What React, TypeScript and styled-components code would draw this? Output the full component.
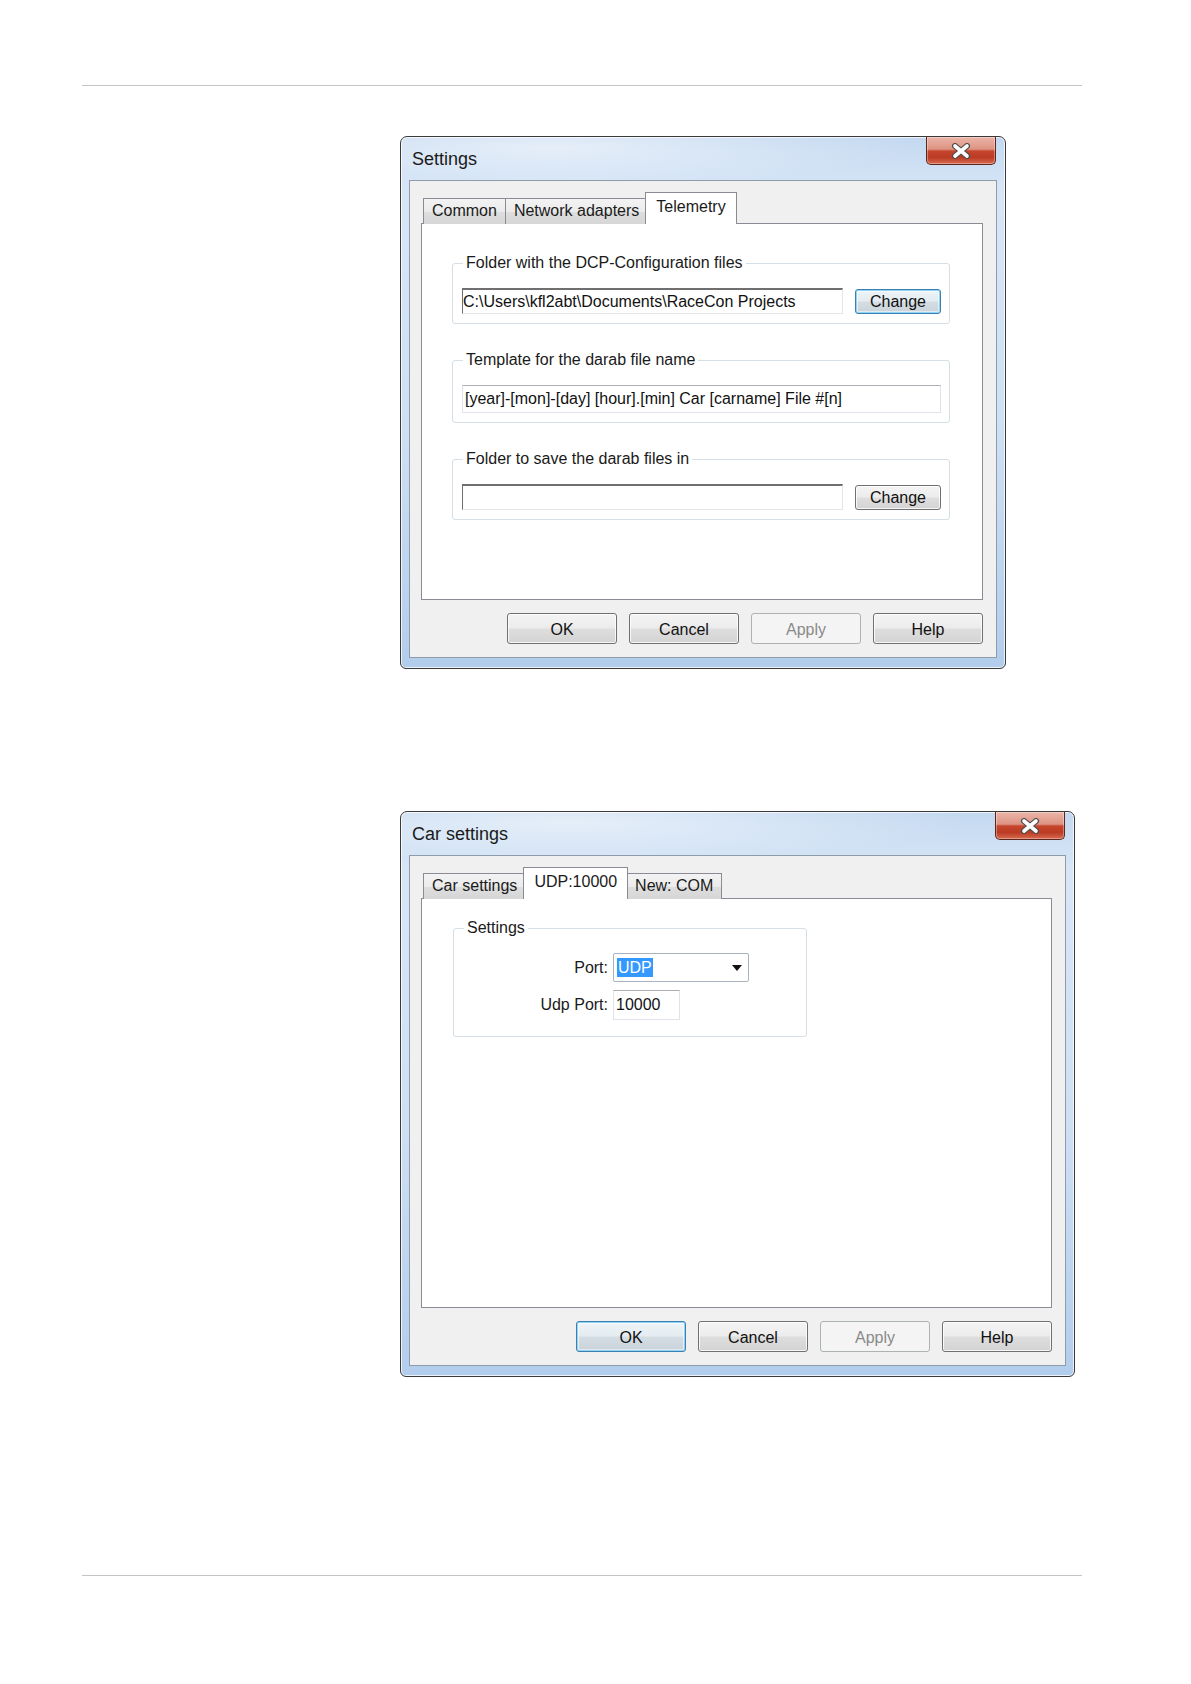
import React from "react";
import styled, { createGlobalStyle, css } from "styled-components";

const GlobalStyle = createGlobalStyle`
  html, body {
    margin: 0;
    padding: 0;
    background: #ffffff;
  }
  body {
    font-family: "Liberation Sans", Arial, sans-serif;
    color: #111111;
  }
`;

const Page = styled.div`
  width: 1191px;
  height: 1684px;
  box-sizing: border-box;
  padding: 85px 109px 0 82px;
  display: flex;
  flex-direction: column;
`;

const Rule = styled.div<{ $top?: number }>`
  height: 0;
  border-top: 1px solid #c4c4c4;
  margin-top: ${(p) => p.$top || 0}px;
`;

const Shots = styled.div`
  display: flex;
  flex-direction: column;
  align-items: flex-start;
  padding-left: 318px;
`;

const Window = styled.div<{ $w: number; $h: number; $top: number }>`
  width: ${(p) => p.$w}px;
  height: ${(p) => p.$h}px;
  margin-top: ${(p) => p.$top}px;
  box-sizing: border-box;
  border: 1px solid #3a3a3a;
  border-radius: 7px 7px 6px 6px;
  padding: 0 8px 10px 8px;
  display: flex;
  flex-direction: column;
  background:
    radial-gradient(ellipse 60% 40px at 25% 10px, rgba(255, 255, 255, 0.55), rgba(255, 255, 255, 0) 100%),
    linear-gradient(180deg, #c3d8f0 0%, #d7e6f7 10%, #cfe0f4 55%, #b2cdec 100%);
  box-shadow: inset 0 0 0 1px rgba(255, 255, 255, 0.75);
`;

const TitleBar = styled.div`
  height: 43px;
  display: flex;
  justify-content: space-between;
  align-items: flex-start;
  flex-shrink: 0;
`;

const Title = styled.div`
  font-size: 18px;
  line-height: 20px;
  padding: 12px 0 0 3px;
  color: #1a1a1a;
`;

const CloseButton = styled.div`
  width: 70px;
  height: 28px;
  box-sizing: border-box;
  margin-right: 1px;
  border: 1px solid #5e251b;
  border-top: 0;
  border-radius: 0 0 5px 5px;
  display: flex;
  align-items: center;
  justify-content: center;
  background: linear-gradient(
    180deg,
    #ebb5a8 0%,
    #de9382 45%,
    #c5452d 52%,
    #bb3b23 75%,
    #d66a50 100%
  );
  box-shadow: inset 0 0 0 1px rgba(255, 255, 255, 0.35);
`;

const Client = styled.div`
  flex: 1;
  display: flex;
  flex-direction: column;
  gap: 13px;
  border: 1px solid #8f9ba8;
  background: #f0f0f0;
  padding: 11px 13px 13px 11px;
`;

const TabControl = styled.div`
  flex: 1;
  display: flex;
  flex-direction: column;
`;

const TabStrip = styled.div`
  display: flex;
  align-items: flex-end;
  padding-left: 2px;
  margin-bottom: -1px;
  position: relative;
  z-index: 1;
`;

const Tab = styled.div<{ $active?: boolean }>`
  box-sizing: border-box;
  height: 26px;
  padding: 0 8px 1px;
  display: flex;
  align-items: center;
  font-size: 16px;
  white-space: nowrap;
  border: 1px solid #898c95;
  border-bottom: 0;
  margin-right: -1px;
  background: linear-gradient(180deg, #f3f3f3 0%, #ebebeb 50%, #dedede 51%, #d6d6d6 100%);
  color: #1a1a1a;
  ${(p) =>
    p.$active &&
    css`
      height: 32px;
      padding: 0 10px 4px;
      margin: 0 -2px 0 -2px;
      background: #ffffff;
      position: relative;
      z-index: 2;
    `}
`;

const TabPage = styled.div<{ $pad: string }>`
  flex: 1;
  border: 1px solid #898c95;
  background: #ffffff;
  padding: ${(p) => p.$pad};
  display: flex;
  flex-direction: column;
  align-items: flex-start;
  gap: 27px;
`;

const Group = styled.fieldset<{ $w?: number; $padBottom?: number }>`
  margin: 0;
  width: ${(p) => (p.$w ? `${p.$w}px` : "100%")};
  box-sizing: border-box;
  border: 1px solid #d5dfe5;
  border-radius: 3px;
  padding: 16px 8px ${(p) => p.$padBottom ?? 9}px 9px;
  min-width: 0;
`;

const Legend = styled.legend`
  font-size: 16px;
  line-height: 18px;
  padding: 0 3px;
  margin-left: 1px;
  color: #1a1a1a;
`;

const FieldRow = styled.div`
  display: flex;
  align-items: center;
  gap: 12px;
`;

const TextBox = styled.div<{ $sunken?: boolean; $w?: number; $h?: number }>`
  box-sizing: border-box;
  height: ${(p) => p.$h || 26}px;
  ${(p) => (p.$w ? `width: ${p.$w}px;` : "flex: 1;")}
  background: #ffffff;
  font-size: 16px;
  line-height: 20px;
  white-space: nowrap;
  overflow: hidden;
  display: flex;
  align-items: center;
  padding: 0 2px;
  color: #111111;
  border: 1px solid #e2e3ea;
  border-top-color: #abadb3;
  ${(p) =>
    p.$sunken &&
    css`
      border-color: #c9c9c9 #e6e6e6 #e6e6e6 #6f6f6f;
      border-top: 2px solid #6f6f6f;
      padding-left: 0;
    `}
`;

const Button = styled.div<{ $w?: number; $h?: number; $focus?: boolean; $disabled?: boolean }>`
  box-sizing: border-box;
  width: ${(p) => p.$w || 110}px;
  height: ${(p) => p.$h || 31}px;
  display: flex;
  align-items: center;
  justify-content: center;
  font-size: 16px;
  color: #111111;
  border: 1px solid #707070;
  border-radius: 3px;
  background: linear-gradient(180deg, #f4f4f4 0%, #ececec 48%, #dedede 52%, #d3d3d3 100%);
  box-shadow: inset 0 0 0 1px rgba(255, 255, 255, 0.8);
  padding-top: 2px;
  ${(p) =>
    p.$focus &&
    css`
      border-color: #3c7fb1;
      box-shadow: inset 0 0 0 1px #8fd3f5, inset 0 0 0 2px rgba(255, 255, 255, 0.5);
      background: linear-gradient(180deg, #eef4f8 0%, #e4ecf1 48%, #d4dde3 52%, #c9d3da 100%);
    `}
  ${(p) =>
    p.$disabled &&
    css`
      border-color: #adb2b5;
      background: #f4f4f4;
      color: #8a8a8a;
      box-shadow: none;
    `}
`;

const ButtonRow = styled.div`
  display: flex;
  justify-content: flex-end;
  gap: 12px;
`;

const FormGrid = styled.div`
  display: grid;
  grid-template-columns: 145px auto;
  column-gap: 5px;
  row-gap: 8px;
  align-items: center;
  justify-items: start;
`;

const FieldLabel = styled.div`
  justify-self: end;
  font-size: 16px;
  color: #1a1a1a;
`;

const Combo = styled.div`
  box-sizing: border-box;
  width: 136px;
  height: 29px;
  background: #ffffff;
  border: 1px solid #a9b3bf;
  border-radius: 2px;
  display: flex;
  align-items: center;
  justify-content: space-between;
  padding: 0 6px 0 3px;
`;

const Selected = styled.span`
  background: #3399ff;
  color: #ffffff;
  font-size: 16px;
  line-height: 19px;
  padding: 0 1px;
`;

const CloseGlyph = () => (
  <svg width="22" height="16" viewBox="0 0 22 16">
    <path d="M5 3 L17 13 M17 3 L5 13" stroke="#4d4d4d" strokeWidth="6" strokeLinecap="round" />
    <path d="M5 3 L17 13 M17 3 L5 13" stroke="#ffffff" strokeWidth="3.6" strokeLinecap="round" />
  </svg>
);

const Caret = () => (
  <svg width="10" height="6" viewBox="0 0 10 6">
    <path d="M0 0 H10 L5 6 Z" fill="#111111" />
  </svg>
);

const DialogButtons = ({ focusOk }: { focusOk?: boolean }) => (
  <ButtonRow>
    <Button $focus={focusOk}>OK</Button>
    <Button>Cancel</Button>
    <Button $disabled>Apply</Button>
    <Button>Help</Button>
  </ButtonRow>
);

const SettingsDialog = () => (
  <Window $w={606} $h={533} $top={50}>
    <TitleBar>
      <Title>Settings</Title>
      <CloseButton>
        <CloseGlyph />
      </CloseButton>
    </TitleBar>
    <Client>
      <TabControl>
        <TabStrip>
          <Tab>Common</Tab>
          <Tab>Network adapters</Tab>
          <Tab $active>Telemetry</Tab>
        </TabStrip>
        <TabPage $pad="30px 32px 0 30px">
          <Group>
            <Legend>Folder with the DCP-Configuration files</Legend>
            <FieldRow>
              <TextBox $sunken>C:\Users\kfl2abt\Documents\RaceCon Projects</TextBox>
              <Button $w={86} $h={25} $focus>
                Change
              </Button>
            </FieldRow>
          </Group>
          <Group>
            <Legend>Template for the darab file name</Legend>
            <TextBox $h={28}>[year]-[mon]-[day] [hour].[min] Car [carname] File #[n]</TextBox>
          </Group>
          <Group>
            <Legend>Folder to save the darab files in</Legend>
            <FieldRow>
              <TextBox $sunken />
              <Button $w={86} $h={25}>
                Change
              </Button>
            </FieldRow>
          </Group>
        </TabPage>
      </TabControl>
      <DialogButtons />
    </Client>
  </Window>
);

const CarSettingsDialog = () => (
  <Window $w={675} $h={566} $top={142}>
    <TitleBar>
      <Title>Car settings</Title>
      <CloseButton>
        <CloseGlyph />
      </CloseButton>
    </TitleBar>
    <Client>
      <TabControl>
        <TabStrip>
          <Tab>Car settings</Tab>
          <Tab $active>UDP:10000</Tab>
          <Tab>New: COM</Tab>
        </TabStrip>
        <TabPage $pad="20px 0 0 31px">
          <Group $w={354} $padBottom={16}>
            <Legend>Settings</Legend>
            <FormGrid>
              <FieldLabel>Port:</FieldLabel>
              <Combo>
                <Selected>UDP</Selected>
                <Caret />
              </Combo>
              <FieldLabel>Udp Port:</FieldLabel>
              <TextBox $w={67} $h={30}>
                10000
              </TextBox>
            </FormGrid>
          </Group>
        </TabPage>
      </TabControl>
      <DialogButtons focusOk />
    </Client>
  </Window>
);

const App = () => (
  <>
    <GlobalStyle />
    <Page>
      <Rule />
      <Shots>
        <SettingsDialog />
        <CarSettingsDialog />
      </Shots>
      <Rule $top={198} />
    </Page>
  </>
);

export default App;
